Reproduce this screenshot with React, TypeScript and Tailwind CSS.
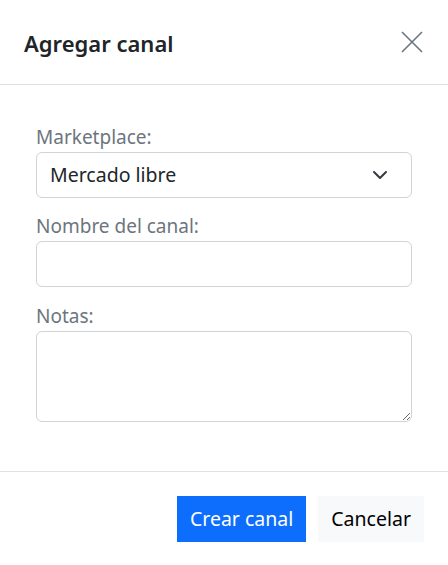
import React, { useState } from "react";

const App = () => {
    const [marketplace, setMarketplace] = useState("Mercado libre");
    const [name, setName] = useState("");
    const [notes, setNotes] = useState("");

    return (
        <div
            className="w-[448px] h-[565px] bg-white flex flex-col text-[#212529]"
            style={{ fontFamily: '"Noto Sans", "Open Sans", sans-serif' }}
        >
            {/* header */}
            <div className="h-[85px] flex items-center justify-between pl-6 pr-6 border-b border-[#dee2e6]">
                <h2 className="text-[22px] font-semibold text-[#212529] mt-[2px]">Agregar canal</h2>
                <button className="w-[24px] h-[24px] flex items-center justify-center text-[#6c757d]">
                    <svg width="24" height="24" viewBox="0 0 24 24" fill="none" stroke="currentColor" strokeWidth="1.6">
                        <path d="M2 2L22 22M22 2L2 22" />
                    </svg>
                </button>
            </div>

            {/* body */}
            <div className="flex-1 px-9 pt-[39px] flex flex-col border-b border-[#dee2e6]">
                <label className="text-[19px] leading-[27px] text-[#6c757d] mb-px">Marketplace:</label>
                <div className="relative">
                    <select
                        value={marketplace}
                        onChange={(e) => setMarketplace(e.target.value)}
                        className="w-full h-[46px] appearance-none border border-[#ced4da] rounded-[6px] pl-[13px] pr-10 text-[19.5px] text-[#212529] bg-white outline-none"
                    >
                        <option>Mercado libre</option>
                        <option>Amazon</option>
                    </select>
                    <svg
                        className="absolute right-[24px] top-[16px] pointer-events-none"
                        width="16"
                        height="14"
                        viewBox="0 0 16 14"
                        fill="none"
                        stroke="#343a40"
                        strokeWidth="2"
                        strokeLinecap="round"
                        strokeLinejoin="round"
                    >
                        <path d="M2 4l6 6 6-6" />
                    </svg>
                </div>

                <label className="text-[19px] leading-[27px] text-[#6c757d] mt-[15px] mb-px">Nombre del canal:</label>
                <input
                    type="text"
                    value={name}
                    onChange={(e) => setName(e.target.value)}
                    className="w-full h-[46px] border border-[#ced4da] rounded-[6px] px-3 text-[19.5px] outline-none"
                />

                <label className="text-[19px] leading-[27px] text-[#6c757d] mt-[16px] mb-px">Notas:</label>
                <textarea
                    value={notes}
                    onChange={(e) => setNotes(e.target.value)}
                    className="w-full h-[91px] border border-[#ced4da] rounded-[6px] px-3 py-2 text-[19.5px] outline-none"
                />
            </div>

            {/* footer */}
            <div className="h-[93px] flex justify-end items-start pt-[24px] pr-6 gap-3">
                <button className="h-[46px] px-[13px] bg-[#0d6efd] text-white text-[19.5px]">Crear canal</button>
                <button className="h-[46px] px-[13px] bg-[#f8f9fa] text-black text-[19.5px]">Cancelar</button>
            </div>
        </div>
    );
};

export default App;
